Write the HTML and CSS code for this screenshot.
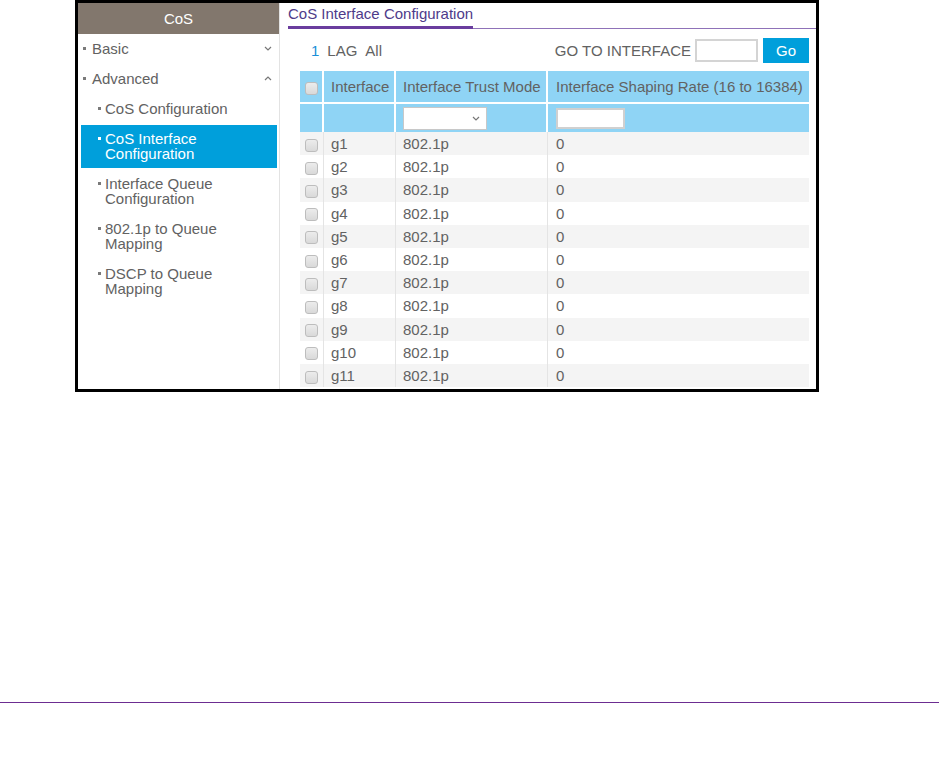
FILE: index.html
```html
<!DOCTYPE html>
<html lang="en">
<head>
    <meta charset="UTF-8">
    <meta name="viewport" content="width=device-width, initial-scale=1.0">
    <title>CoS Interface Configuration</title>
    <link rel="stylesheet" href="styles.css">
</head>
<body>

    <div class="frame">
        <aside class="sidebar">
            <div class="sidebar-title">CoS</div>
            <ul class="nav">
                <li class="nav-item">
                    <span class="dot"></span><span class="label">Basic</span>
                    <svg class="chev" width="8" height="5" viewBox="0 0 8 5"><polyline points="1,1 4,4 7,1"/></svg>
                </li>
                <li class="nav-item">
                    <span class="dot"></span><span class="label">Advanced</span>
                    <svg class="chev" width="8" height="5" viewBox="0 0 8 5"><polyline points="1,4 4,1 7,4"/></svg>
                </li>
                <li class="nav-item sub"><span class="dot"></span><span class="label">CoS Configuration</span></li>
                <li class="nav-item sub active"><span class="dot"></span><span class="label">CoS Interface Configuration</span></li>
                <li class="nav-item sub"><span class="dot"></span><span class="label">Interface Queue Configuration</span></li>
                <li class="nav-item sub"><span class="dot"></span><span class="label">802.1p to Queue Mapping</span></li>
                <li class="nav-item sub"><span class="dot"></span><span class="label">DSCP to Queue Mapping</span></li>
            </ul>
        </aside>

        <main class="content">
            <div class="tabs">
                <span class="tab">CoS Interface Configuration</span>
            </div>

            <div class="toolbar">
                <span class="unit current">1</span>
                <span class="unit">LAG</span>
                <span class="unit">All</span>
                <div class="goto">
                    <label for="goto">GO TO INTERFACE</label>
                    <input type="text" id="goto" class="goto-input">
                    <button class="btn">Go</button>
                </div>
            </div>

            <table class="grid">
                <colgroup>
                    <col style="width:24px">
                    <col style="width:72px">
                    <col style="width:152px">
                    <col style="width:261px">
                </colgroup>
                <thead>
                    <tr>
                        <th class="check"><input type="checkbox" class="box"></th>
                        <th>Interface</th>
                        <th>Interface Trust Mode</th>
                        <th>Interface Shaping Rate (16 to 16384)</th>
                    </tr>
                    <tr class="filter">
                        <td></td>
                        <td></td>
                        <td>
                            <span class="select-wrap">
                                <select class="select"><option></option><option>802.1p</option><option>DSCP</option></select>
                                <svg class="select-chev" width="8" height="5" viewBox="0 0 8 5"><polyline points="1,1 4,4 7,1"/></svg>
                            </span>
                        </td>
                        <td><input type="text" class="filter-input"></td>
                    </tr>
                </thead>
                <tbody>
                    <tr><td class="check"><input type="checkbox" class="box"></td><td>g1</td><td>802.1p</td><td>0</td></tr>
                    <tr><td class="check"><input type="checkbox" class="box"></td><td>g2</td><td>802.1p</td><td>0</td></tr>
                    <tr><td class="check"><input type="checkbox" class="box"></td><td>g3</td><td>802.1p</td><td>0</td></tr>
                    <tr><td class="check"><input type="checkbox" class="box"></td><td>g4</td><td>802.1p</td><td>0</td></tr>
                    <tr><td class="check"><input type="checkbox" class="box"></td><td>g5</td><td>802.1p</td><td>0</td></tr>
                    <tr><td class="check"><input type="checkbox" class="box"></td><td>g6</td><td>802.1p</td><td>0</td></tr>
                    <tr><td class="check"><input type="checkbox" class="box"></td><td>g7</td><td>802.1p</td><td>0</td></tr>
                    <tr><td class="check"><input type="checkbox" class="box"></td><td>g8</td><td>802.1p</td><td>0</td></tr>
                    <tr><td class="check"><input type="checkbox" class="box"></td><td>g9</td><td>802.1p</td><td>0</td></tr>
                    <tr><td class="check"><input type="checkbox" class="box"></td><td>g10</td><td>802.1p</td><td>0</td></tr>
                    <tr><td class="check"><input type="checkbox" class="box"></td><td>g11</td><td>802.1p</td><td>0</td></tr>
                </tbody>
            </table>
        </main>
    </div>

    <div class="page-rule"></div>

</body>
</html>
```

FILE: styles.css
```css
*{margin: 0;
    padding: 0;
    box-sizing: border-box;
}
body{
    font-family: "Liberation Sans", Arial, sans-serif;
    font-size: 15px;
    color: #626262;
    background-color: #fff;
}
.frame{
    width: 744px;
    height: 392px;
    margin-left: 75px;
    border: 3px solid #000;
    display: flex;
    overflow: hidden;
}

/* left menu */
.sidebar{
    width: 202px;
    flex-shrink: 0;
    border-right: 1px solid #e3e3e3;
}
.sidebar-title{
    height: 31px;
    line-height: 31px;
    text-align: center;
    color: #fff;
    background-color: #82776d;
}
.nav{
    list-style: none;
}
.nav-item{
    display: flex;
    align-items: flex-start;
    padding: 7px 7px 8px 5px;
    line-height: 15px;
    cursor: pointer;
}
.nav-item .dot{
    width: 3px;
    height: 3px;
    margin: 6px 6px 0 0;
    flex-shrink: 0;
    background-color: #7a7a7a;
}
.nav-item.sub{
    padding: 7px 16px 8px 20px;
}
.nav-item.sub .dot{
    margin-right: 4px;
}
.nav-item.active{
    margin: 1px 2px 1px 3px;
    padding: 6px 11px 7px 17px;
    color: #fff;
    background-color: #009fdb;
}
.nav-item.active .dot{
    background-color: #fff;
}
.chev{
    margin-left: auto;
    margin-top: 5px;
    fill: none;
    stroke: #777;
    stroke-width: 1.2;
}

/* right side */
.content{
    flex: 1;
    min-width: 0;
}
.tabs{
    display: flex;
    height: 26px;
    margin-left: 8px;
    border-bottom: 1px solid #8f72b8;
}
.tab{
    height: 26px;
    padding-top: 2px;
    line-height: 18px;
    color: #4e3b8a;
    border-bottom: 3px solid #6a3d9e;
    margin-bottom: -1px;
}
.toolbar{
    display: flex;
    align-items: center;
    gap: 8px;
    height: 42px;
    padding: 0 7px 0 31px;
}
.unit{
    cursor: pointer;
}
.unit.current{
    color: #1a8fd8;
}
.goto{
    margin-left: auto;
    display: flex;
    align-items: center;
}
.goto label{
    margin-right: 4px;
}
.goto-input{
    width: 63px;
    height: 23px;
    margin-right: 5px;
    border: 2px solid #d4d4d4;
    background-color: #fff;
}
.btn{
    width: 46px;
    height: 25px;
    border: none;
    color: #fff;
    background-color: #009fdb;
    font: inherit;
    cursor: pointer;
}

/* table */
.grid{
    width: 509px;
    margin-left: 20px;
    table-layout: fixed;
    border-collapse: separate;
    border-spacing: 0;
}
.grid th{
    height: 33px;
    padding: 0 0 0 7px;
    text-align: left;
    font-weight: normal;
    white-space: nowrap;
    background-color: #8fd4f5;
    border-right: 2px solid #fff;
    border-bottom: 2px solid #fff;
}
.grid .filter td{
    height: 28px;
    padding: 0 0 0 7px;
    background-color: #8fd4f5;
    border-right: 2px solid #fff;
}
.grid th:last-child,
.grid .filter td:last-child{
    border-right: none;
    padding-left: 8px;
}
.grid tbody td{
    height: 23.2px;
    padding: 0 0 0 7px;
    line-height: 17px;
    border-right: 1px solid #e4e4e4;
}
.grid tbody td:last-child{
    border-right: none;
    padding-left: 8px;
}
.grid tbody tr:nth-child(odd) td{
    background-color: #f4f4f4;
}
.grid .check{
    padding: 0;
    text-align: center;
}
.box{
    appearance: none;
    -webkit-appearance: none;
    display: inline-block;
    width: 13px;
    height: 13px;
    vertical-align: middle;
    border: 1px solid #bdbdbd;
    border-radius: 3px;
    background: linear-gradient(#ececec, #d9d9d9);
}
.select-wrap{
    position: relative;
    display: inline-block;
    vertical-align: middle;
}
.select{
    appearance: none;
    -webkit-appearance: none;
    display: block;
    width: 84px;
    height: 23px;
    border: 1px solid #c8c8c8;
    background-color: #fff;
    font: inherit;
}
.select-chev{
    position: absolute;
    right: 7px;
    top: 9px;
    fill: none;
    stroke: #777;
    stroke-width: 1.2;
    pointer-events: none;
}
.filter-input{
    width: 69px;
    height: 21px;
    vertical-align: middle;
    border: 2px solid #d0d0d0;
    background-color: #fff;
}

.page-rule{
    height: 1px;
    margin-top: 310px;
    background-color: #6c2d91;
}
```
